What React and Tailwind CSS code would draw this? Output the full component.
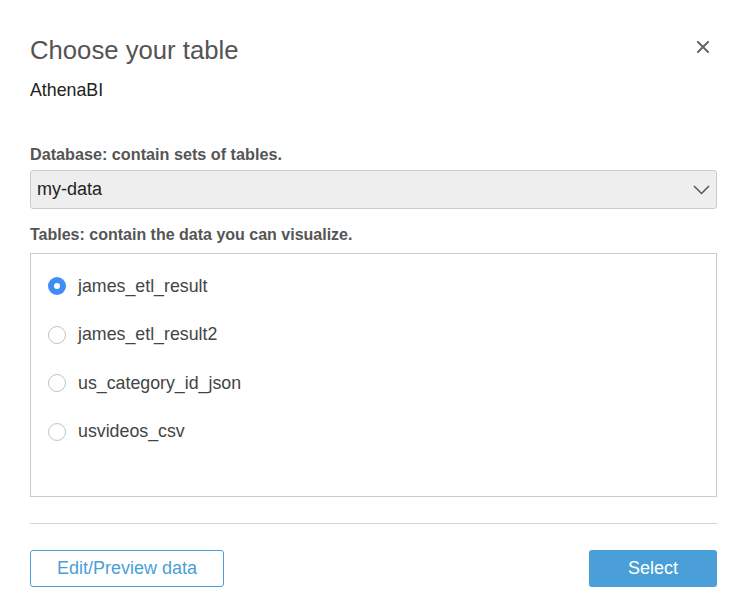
import React, { useState } from "react";

const tables = ["james_etl_result", "james_etl_result2", "us_category_id_json", "usvideos_csv"];

function Radio({ checked }) {
  return checked ? (
    <span className="w-[18px] h-[18px] rounded-full bg-[#3f8ef5] flex items-center justify-center shrink-0">
      <span className="w-[6px] h-[6px] rounded-full bg-white" />
    </span>
  ) : (
    <span className="w-[18px] h-[18px] rounded-full border border-[#c4c4c4] bg-white shrink-0" />
  );
}

export default function App() {
  const [selected, setSelected] = useState(0);

  return (
    <div className="w-[737px] h-[608px] bg-white pl-[30px] pr-[20px] font-['Liberation_Sans',Arial,sans-serif] overflow-hidden">
      <div className="pt-[35px] flex justify-between items-start">
        <h1 className="text-[25.7px] leading-[30px] text-[#545454]">Choose your table</h1>
        <svg className="mt-[6px] mr-[8px]" width="12" height="12" viewBox="0 0 12 12">
          <path d="M1 1 L11 11 M11 1 L1 11" stroke="#666" strokeWidth="2" strokeLinecap="square" />
        </svg>
      </div>

      <div className="mt-[15px] text-[17.8px] leading-[20px] text-[#222]">AthenaBI</div>

      <div className="mt-[44px] text-[16.2px] leading-[20px] font-bold text-[#555]">Database: contain sets of tables.</div>
      <div className="mt-[6px] h-[39px] bg-[#eeeeee] border border-[#cccccc] rounded-[3px] pl-[6px] pr-[6px] flex items-center justify-between">
        <span className="text-[18px] text-[#222]">my-data</span>
        <svg width="17" height="10" viewBox="0 0 17 10">
          <polyline points="1,1 8.5,8.5 16,1" fill="none" stroke="#555" strokeWidth="1.5" />
        </svg>
      </div>

      <div className="mt-[16px] text-[16px] leading-[20px] font-bold text-[#555]">Tables: contain the data you can visualize.</div>
      <div className="mt-[8px] h-[244px] border border-[#cccccc] pt-[8px] pl-[17px]">
        {tables.map((t, i) => (
          <div
            key={t}
            className="h-[48.5px] flex items-center gap-[12px] cursor-pointer"
            onClick={() => setSelected(i)}
          >
            <Radio checked={selected === i} />
            <span className="text-[17.8px] text-[#444]">{t}</span>
          </div>
        ))}
      </div>

      <div className="mt-[26px] border-t border-[#d4d4d4]" />

      <div className="mt-[26px] flex justify-between">
        <button className="w-[194px] h-[37px] border border-[#4a9fd8] rounded-[3px] text-[18px] text-[#4a9fd8] bg-white">
          Edit/Preview data
        </button>
        <button className="w-[128px] h-[37px] rounded-[3px] text-[18px] text-white bg-[#4a9fd8]">
          Select
        </button>
      </div>
    </div>
  );
}
